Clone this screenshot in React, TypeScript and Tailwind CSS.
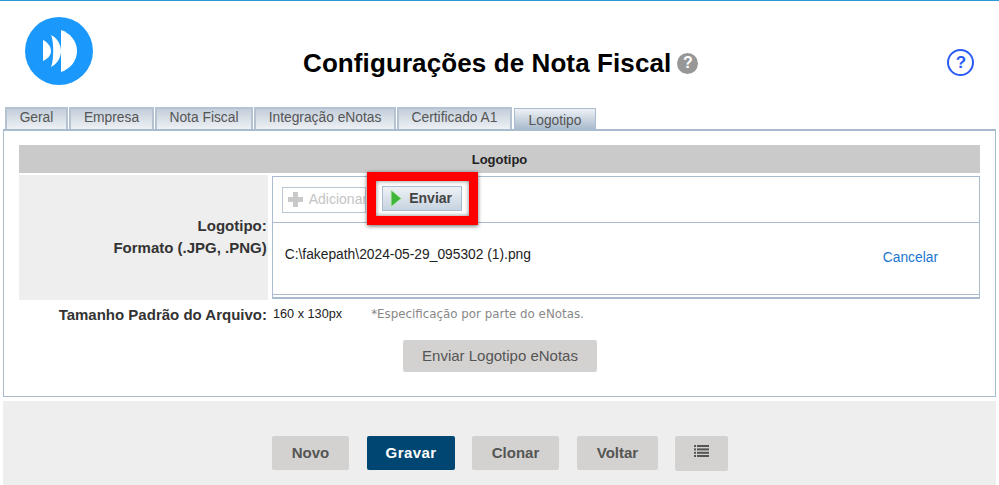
const tabs = ["Geral", "Empresa", "Nota Fiscal", "Integração eNotas", "Certificado A1"];

const tabWidths: Record<string, string> = {
  Geral: "w-[63px]",
  Empresa: "w-[85px]",
  "Nota Fiscal": "w-[98px]",
  "Integração eNotas": "w-[142px]",
  "Certificado A1": "w-[115px]",
};

const footerButton =
  "h-[34px] rounded-[2px] bg-[#d3d2d0] text-[15px] font-bold text-[#555] flex items-center justify-center";

const Logo = () => (
  <svg width="68" height="68" viewBox="0 0 68 68">
    <circle cx="34" cy="34" r="34" fill="#1a98fc" />
    <path d="M18 23 C22 25 26 29 26 34 C26 39 22 42 18 44 Z" fill="#fff" />
    <path d="M26 18 C32 21 36 27 36 34 C36 41 32 47 26 50 C29 44 29 24 26 18 Z" fill="#fff" />
    <path d="M36 13 C45 16 52 24 52 34 C52 44 45 52 36 55 Z" fill="#fff" />
  </svg>
);

export default function App() {
  return (
    <div className="h-[485px] w-[999px] overflow-hidden bg-white font-['Liberation_Sans',Arial,sans-serif]">
      <div className="h-px bg-[#2a9ad6]" />

      {/* cabecalho */}
      <header className="flex h-[105px] items-start">
        <div className="ml-[25px] mt-4">
          <Logo />
        </div>
        <div className="ml-[210px] mt-[46px] flex items-center">
          <h1 className="text-[26px] leading-[32px] font-bold tracking-[0.1px] text-black">Configurações de Nota Fiscal</h1>
          <span className="ml-[6px] flex h-[21px] w-[21px] items-center justify-center rounded-full bg-[#979797] text-[16px] font-bold text-white">
            ?
          </span>
        </div>
        <div className="ml-[249px] mt-[48px] flex h-[27px] w-[27px] items-center justify-center rounded-full border-[2.5px] border-[#2a5cf5] text-[17px] leading-none font-bold text-[#2a5cf5]">
          ?
        </div>
      </header>

      {/* abas */}
      <nav className="ml-[5px] flex h-[23px] items-end gap-px">
        {tabs.map((tab) => (
          <div
            key={tab}
            className={`${tabWidths[tab]} flex h-[22px] items-center justify-center border-2 border-b-0 border-[#b5c2d1] bg-gradient-to-b from-[#c3ceda] to-[#eef1f5] pb-px text-[13.8px] text-[#555]`}
          >
            {tab}
          </div>
        ))}
        <div className="ml-px flex h-[21px] w-[82px] items-center justify-center border border-b-0 border-[#a9bccf] bg-gradient-to-b from-[#eef1f5] to-[#a9bbcd] pt-1 text-[13.8px] text-[#555]">
          Logotipo
        </div>
      </nav>

      {/* painel */}
      <main className="mx-[3px] h-[268px] border border-t-2 border-[#a9bccf] px-[15px] pt-[14px]">
        <div className="h-[28px] bg-[#cacaca] text-center text-[13px] leading-[29px] font-bold text-[#222]">Logotipo</div>

        <div className="mt-0.5 flex h-[125px]">
          <div className="flex w-[249px] flex-col items-end justify-center bg-[#eeeeee] pr-px pb-[2px] text-[15px] font-bold text-[#333]">
            <span className="leading-[22px]">Logotipo:</span>
            <span className="leading-[22px]">Formato (.JPG, .PNG)</span>
          </div>

          <div className="mt-px ml-[4px] h-[123px] w-[709px] border border-b-2 border-[#a9bccf]">
            <div className="relative flex h-[46px] items-center border-b border-[#a9bccf] pl-[9px]">
              <div className="flex h-[26px] w-[84px] items-center overflow-hidden border border-[#b9c7d6] pl-1 text-[14px] whitespace-nowrap text-[#c4c4c4]">
                <svg width="17" height="17" viewBox="0 0 17 17" className="mr-[5px] shrink-0">
                  <path d="M6 1h5v5h5v5h-5v5H6v-5H1V6h5z" fill="#c9c9c9" />
                </svg>
                Adicionar
              </div>

              {/* destaque vermelho */}
              <div className="absolute top-[-5px] left-[94px] flex h-[53px] w-[111px] items-center justify-center border-[9px] border-[#ff0000] shadow-[0_1px_4px_rgba(0,0,0,0.6),inset_0_0_4px_rgba(0,0,0,0.5)]">
                <div className="flex h-[25px] w-[80px] items-center border border-[#a9bccf] bg-gradient-to-b from-[#eef2f6] to-[#c6d3e0] pl-[7px] text-[14px] font-bold text-[#444]">
                  <svg width="12" height="19" viewBox="0 0 12 19" className="mr-[7px] shrink-0">
                    <path d="M1 1 C5 4 8 7 11.5 9.5 C8 12 5 15 1 18 Z" fill="#3fb53a" stroke="#c9ecc0" strokeWidth="1" strokeLinejoin="round" />
                  </svg>
                  Enviar
                </div>
              </div>
            </div>

            <div className="flex h-[72px] items-start justify-between border-b border-[#a9bccf] pt-[24px] pl-[12px]">
              <span className="text-[13.8px] leading-[16px] text-[#222]">C:\fakepath\2024-05-29_095302 (1).png</span>
              <span className="mt-[3px] mr-[41px] text-[13.8px] leading-[16px] text-[#1b75cf]">Cancelar</span>
            </div>
          </div>
        </div>

        <div className="mt-[5px] flex h-[20px] items-center">
          <div className="w-[249px] pr-px text-right text-[15px] font-bold whitespace-nowrap text-[#333]">Tamanho Padrão do Arquivo:</div>
          <span className="ml-[5px] text-[12.7px] text-[#222]">160 x 130px</span>
          <span className="ml-[29px] font-['DejaVu_Sans',sans-serif] text-[11.85px] text-[#888]">*Especificação por parte do eNotas.</span>
        </div>

        <div className="mt-[15px] flex justify-center pl-[1px]">
          <div className="flex h-[32px] w-[194px] items-center justify-center rounded-[2px] bg-[#d3d2d0] text-[15px] text-[#555]">
            Enviar Logotipo eNotas
          </div>
        </div>
      </main>

      {/* rodape */}
      <footer className="mx-[3px] mt-[4px] flex h-[85px] items-start bg-[#eeeeee] pt-[35px] pl-[269px]">
        <div className={`${footerButton} w-[77px]`}>Novo</div>
        <div className={`${footerButton} ml-[18px] w-[88px] !bg-[#004672] tracking-[0.4px] !text-white`}>Gravar</div>
        <div className={`${footerButton} ml-[17px] w-[87px]`}>Clonar</div>
        <div className={`${footerButton} ml-[18px] w-[81px]`}>Voltar</div>
        <div className={`${footerButton} ml-[17px] !h-[35px] w-[53px] pb-[6px]`}>
          <svg width="15" height="12" viewBox="0 0 15 12" fill="#555">
            <rect x="0" y="0" width="2" height="2" />
            <rect x="3" y="0" width="12" height="2" />
            <rect x="0" y="3.4" width="2" height="2" />
            <rect x="3" y="3.4" width="12" height="2" />
            <rect x="0" y="6.8" width="2" height="2" />
            <rect x="3" y="6.8" width="12" height="2" />
            <rect x="0" y="10" width="2" height="2" />
            <rect x="3" y="10" width="12" height="2" />
          </svg>
        </div>
      </footer>
    </div>
  );
}
